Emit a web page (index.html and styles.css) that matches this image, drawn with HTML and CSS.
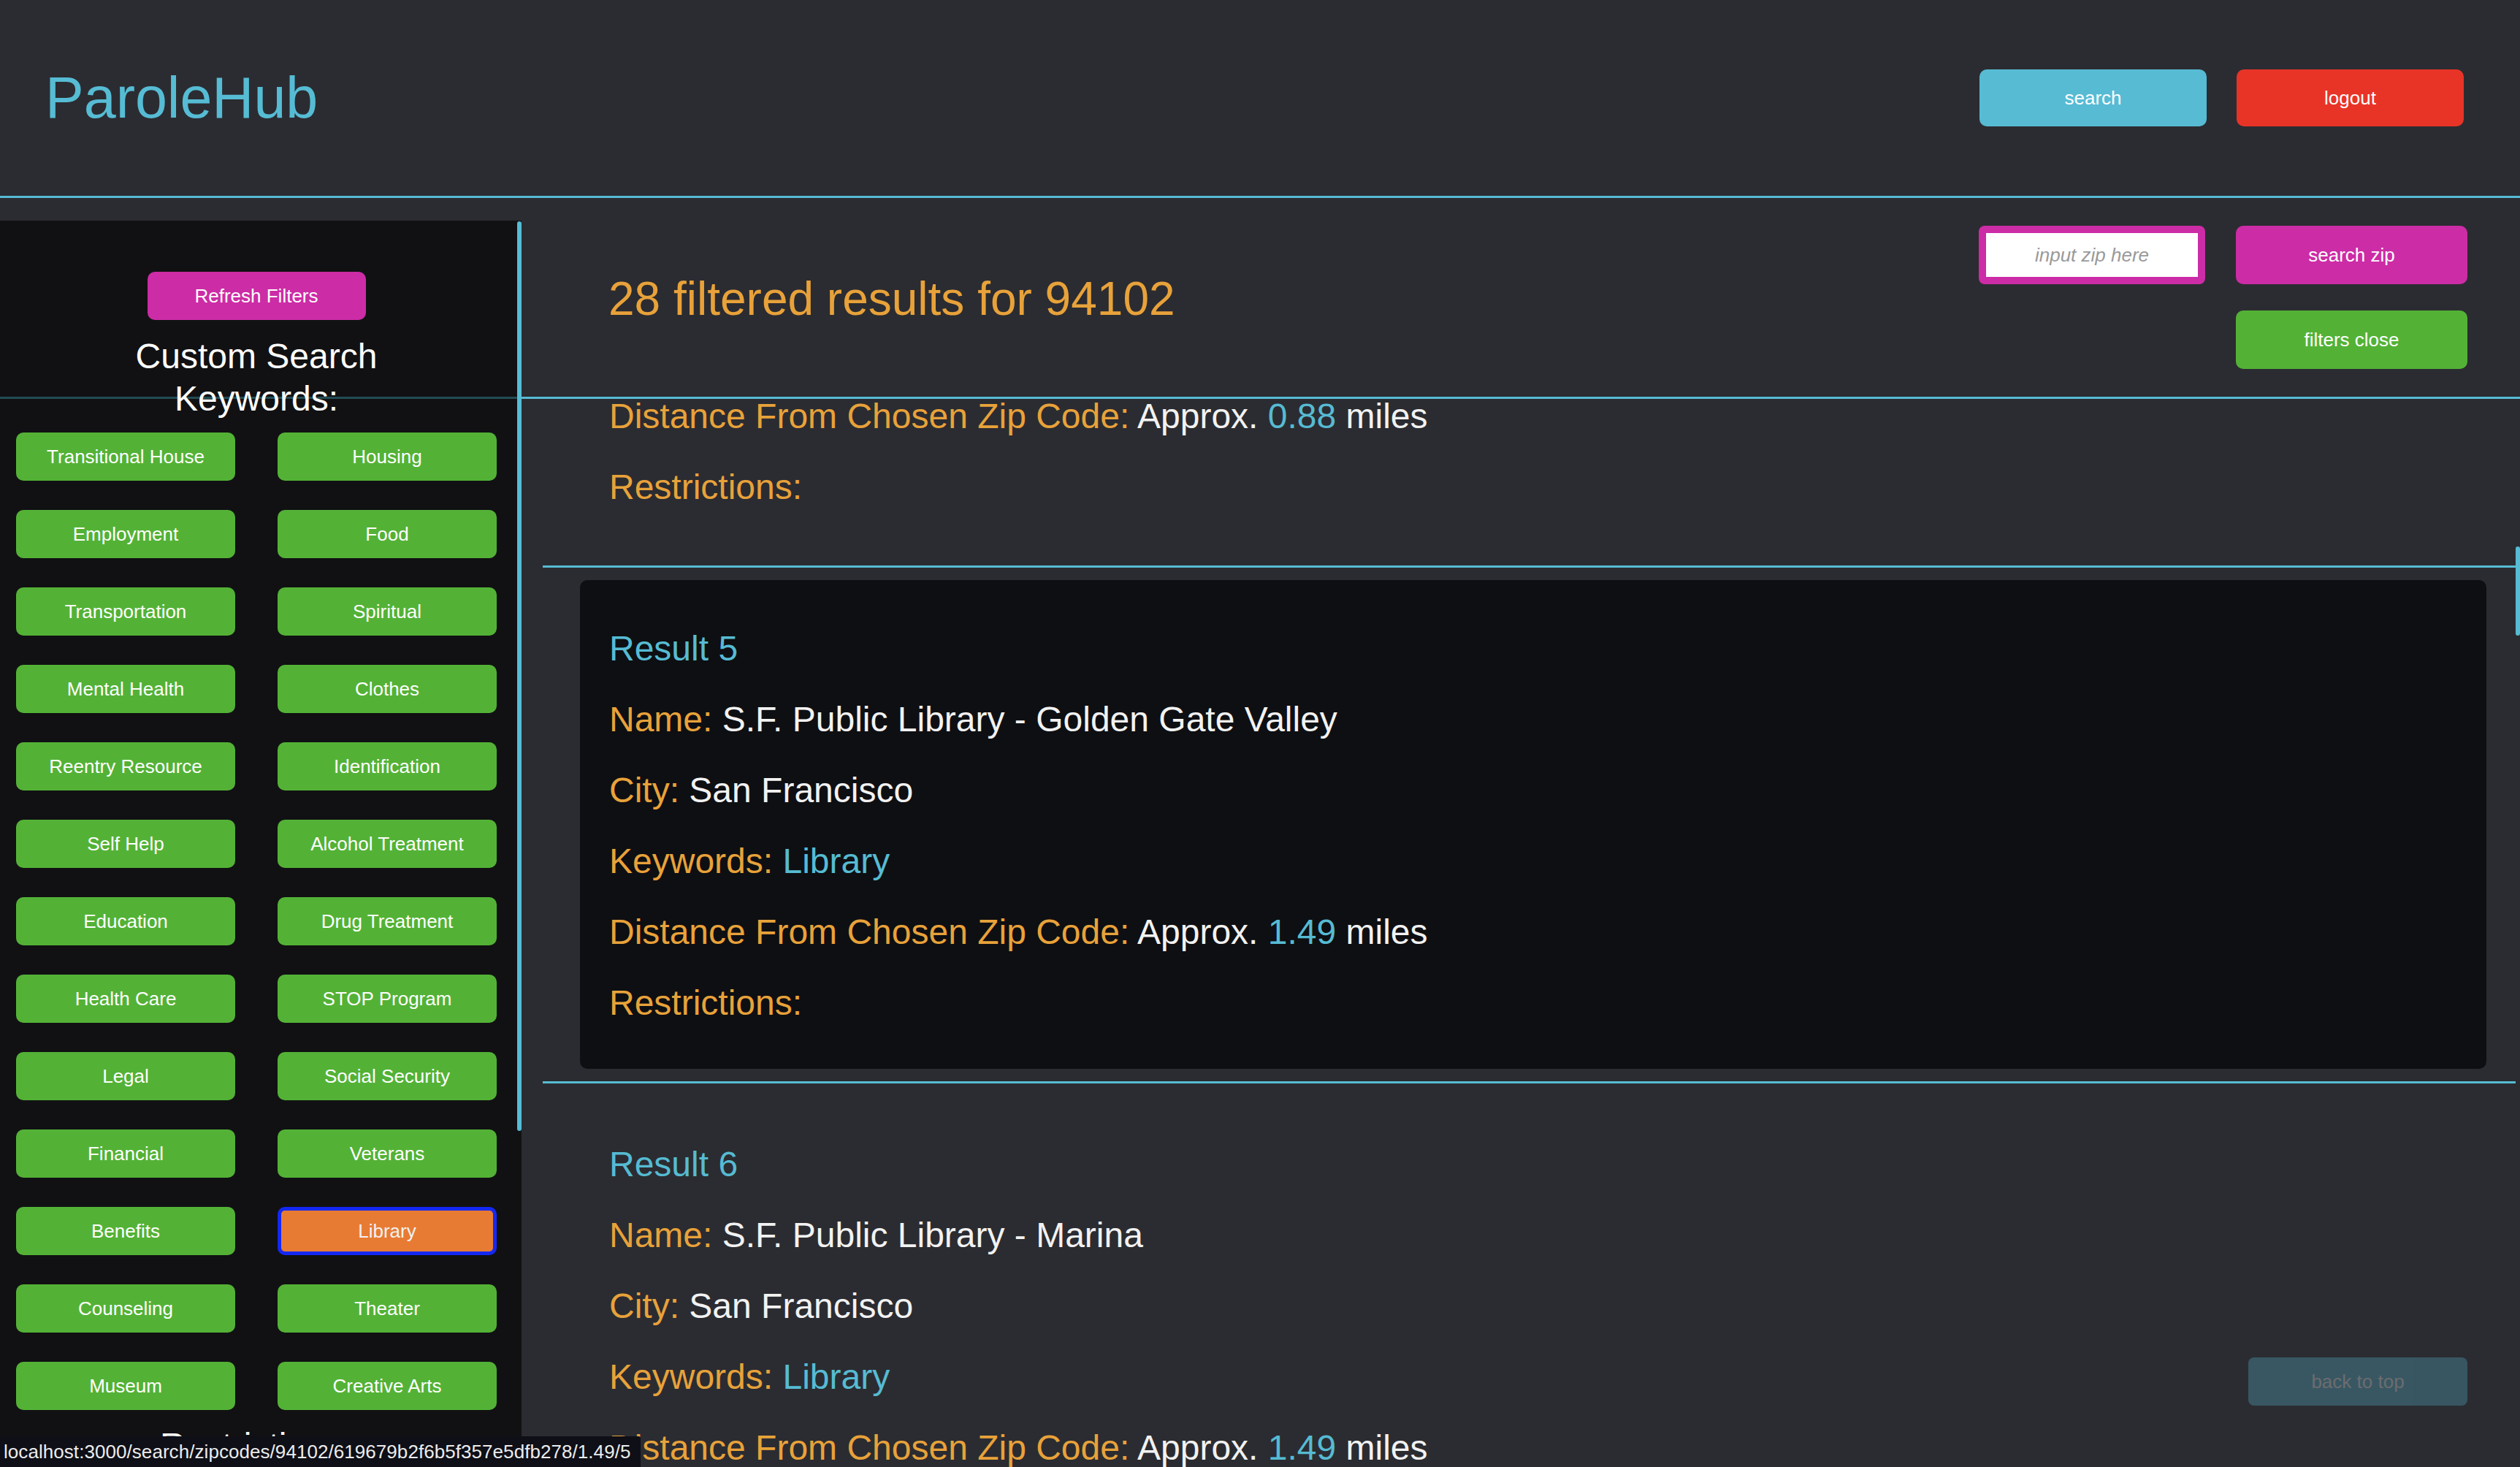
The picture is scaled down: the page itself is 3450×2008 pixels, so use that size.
FILE: index.html
```html
<!DOCTYPE html>
<html lang="en">
<head>
<meta charset="utf-8">
<title>ParoleHub</title>
<link rel="stylesheet" href="styles.css">
</head>
<body>
<div class="app">
  <header class="topbar">
    <h1 class="logo">ParoleHub</h1>
    <nav class="top-actions">
      <button class="btn btn-blue top-btn">search</button>
      <button class="btn btn-red top-btn">logout</button>
    </nav>
  </header>

  <section class="subbar">
    <h2 class="results-title">28 filtered results for 94102</h2>
    <div class="zip-controls">
      <input class="zip-input" type="text" placeholder="input zip here">
      <button class="btn btn-magenta ctrl-btn">search zip</button>
      <span class="spacer"></span>
      <button class="btn btn-green ctrl-btn">filters close</button>
    </div>
  </section>

  <main class="results-viewport">
    <div class="results-list">
      <article class="result result-partial">
        <div class="card card-partial">
          <p class="field"><span class="label">Distance From Chosen Zip Code:</span> Approx. <span class="accent">0.88</span> miles</p>
          <p class="field"><span class="label">Restrictions:</span></p>
        </div>
      </article>
      <article class="result">
        <div class="card card-active">
          <p class="field title">Result 5</p>
          <p class="field"><span class="label">Name:</span> S.F. Public Library - Golden Gate Valley</p>
          <p class="field"><span class="label">City:</span> San Francisco</p>
          <p class="field"><span class="label">Keywords:</span> <span class="accent">Library</span></p>
          <p class="field"><span class="label">Distance From Chosen Zip Code:</span> Approx. <span class="accent">1.49</span> miles</p>
          <p class="field"><span class="label">Restrictions:</span></p>
        </div>
      </article>
      <article class="result">
        <div class="card">
          <p class="field title">Result 6</p>
          <p class="field"><span class="label">Name:</span> S.F. Public Library - Marina</p>
          <p class="field"><span class="label">City:</span> San Francisco</p>
          <p class="field"><span class="label">Keywords:</span> <span class="accent">Library</span></p>
          <p class="field"><span class="label">Distance From Chosen Zip Code:</span> Approx. <span class="accent">1.49</span> miles</p>
          <p class="field"><span class="label">Restrictions:</span></p>
        </div>
      </article>
    </div>
    <span class="scroll-thumb main-thumb"></span>
  </main>

  <aside class="sidebar">
    <button class="btn btn-magenta refresh-btn">Refresh Filters</button>
    <h3 class="side-heading">Custom Search Keywords:</h3>
    <div class="keyword-grid">
      <button class="btn btn-green kw">Transitional House</button>
      <button class="btn btn-green kw">Housing</button>
      <button class="btn btn-green kw">Employment</button>
      <button class="btn btn-green kw">Food</button>
      <button class="btn btn-green kw">Transportation</button>
      <button class="btn btn-green kw">Spiritual</button>
      <button class="btn btn-green kw">Mental Health</button>
      <button class="btn btn-green kw">Clothes</button>
      <button class="btn btn-green kw">Reentry Resource</button>
      <button class="btn btn-green kw">Identification</button>
      <button class="btn btn-green kw">Self Help</button>
      <button class="btn btn-green kw">Alcohol Treatment</button>
      <button class="btn btn-green kw">Education</button>
      <button class="btn btn-green kw">Drug Treatment</button>
      <button class="btn btn-green kw">Health Care</button>
      <button class="btn btn-green kw">STOP Program</button>
      <button class="btn btn-green kw">Legal</button>
      <button class="btn btn-green kw">Social Security</button>
      <button class="btn btn-green kw">Financial</button>
      <button class="btn btn-green kw">Veterans</button>
      <button class="btn btn-green kw">Benefits</button>
      <button class="btn kw kw-selected">Library</button>
      <button class="btn btn-green kw">Counseling</button>
      <button class="btn btn-green kw">Theater</button>
      <button class="btn btn-green kw">Museum</button>
      <button class="btn btn-green kw">Creative Arts</button>
    </div>
    <h3 class="side-heading side-heading-2">Restrictions:</h3>
    <span class="scroll-thumb side-thumb"></span>
  </aside>

  <button class="btn back-top">back to top</button>
  <div class="status-bar">localhost:3000/search/zipcodes/94102/619679b2f6b5f357e5dfb278/1.49/5</div>
</div>
</body>
</html>
```

FILE: styles.css
```css
* { box-sizing: border-box; }

html, body {
  margin: 0;
  padding: 0;
  height: 100%;
  overflow: hidden;
}

body {
  background: #2b2c31;
  font-family: "Liberation Sans", Arial, Helvetica, sans-serif;
  color: #f0f0f0;
}

.app {
  position: relative;
  height: 100vh;
  display: flex;
  flex-direction: column;
}

/* ---------- buttons ---------- */
.btn {
  font-family: inherit;
  font-size: 26px;
  line-height: 30px;
  color: #ffffff;
  border: 0;
  border-radius: 10px;
  padding: 0;
  cursor: pointer;
  text-align: center;
}
.btn-blue { background: #57bbd4; }
.btn-red { background: #e83427; }
.btn-magenta { background: #cc2ca6; }
.btn-green { background: #53b236; }

/* ---------- top bar ---------- */
.topbar {
  flex: 0 0 auto;
  height: 271px;
  display: flex;
  align-items: center;
  justify-content: space-between;
  padding: 0 77px 0 62px;
  border-bottom: 3px solid #56bbd3;
}

.logo {
  margin: 0;
  font-size: 79px;
  line-height: 92px;
  font-weight: normal;
  color: #56bcd4;
}

.top-actions {
  display: flex;
  gap: 41px;
}

.top-btn {
  width: 311px;
  height: 78px;
}

/* ---------- sub bar ---------- */
.subbar {
  flex: 0 0 auto;
  height: 275px;
  display: flex;
  align-items: flex-start;
  padding: 0 72px 0 833px;
  border-bottom: 3px solid #56bbd3;
}

.results-title {
  margin: 102px 0 0 0;
  font-size: 64px;
  line-height: 72px;
  font-weight: normal;
  color: #e8a23a;
}

.zip-controls {
  margin: 38px 0 0 auto;
  display: grid;
  grid-template-columns: 310px 317px;
  grid-auto-rows: 80px;
  column-gap: 42px;
  row-gap: 36px;
}

.zip-input {
  width: 310px;
  height: 80px;
  border: 10px solid #cc2ca6;
  border-radius: 8px;
  background: #ffffff;
  font-family: inherit;
  font-size: 26px;
  font-style: italic;
  text-align: center;
  color: #333;
  outline: none;
}
.zip-input::placeholder {
  color: #9a9a9a;
  font-style: italic;
}

.ctrl-btn {
  width: 317px;
  height: 80px;
}

/* ---------- results ---------- */
.results-viewport {
  flex: 1 1 auto;
  position: relative;
  overflow: hidden;
}

.results-list {
  margin: -4px 6px 0 743px;
}

.result {
  padding: 17px 40px 17px 51px;
  border-bottom: 3px solid #56bbd3;
}
.result-partial { padding-top: 0; }

.card {
  display: flex;
  flex-direction: column;
  gap: 42px;
  padding: 66px 0 63px 40px;
  border-radius: 10px;
}
.card-partial { padding-top: 0; }
.card-active { background: #0e0f12; }

.field {
  margin: 0;
  font-size: 48px;
  line-height: 55px;
  color: #f2f2f2;
  white-space: nowrap;
}
.field.title { color: #56bbd3; }
.label { color: #e8a23a; }
.accent { color: #56bbd3; }

/* ---------- sidebar (overlay panel) ---------- */
.sidebar {
  position: absolute;
  left: 0;
  top: 302px;
  bottom: 0;
  width: 714px;
  padding-right: 12px;
  background: rgba(0, 0, 0, 0.6);
  overflow: hidden;
  display: flex;
  flex-direction: column;
  align-items: center;
}

.refresh-btn {
  margin-top: 70px;
  width: 299px;
  height: 66px;
  flex: 0 0 auto;
}

.side-heading {
  margin: 21px 0 0 0;
  width: 400px;
  font-size: 48px;
  line-height: 57.6px;
  font-weight: normal;
  text-align: center;
  color: #ffffff;
}
.side-heading-2 { margin-top: 20px; }

.keyword-grid {
  margin-top: 18px;
  display: grid;
  grid-template-columns: 300px 300px;
  grid-auto-rows: 66px;
  column-gap: 58px;
  row-gap: 40px;
}

.kw {
  width: 300px;
  height: 66px;
}

.kw-selected {
  background: #e87b33;
  border: 5px solid #1428f2;
  color: #f2f2f2;
}

/* ---------- overlays ---------- */
.scroll-thumb {
  position: absolute;
  right: 0;
  width: 6px;
  border-radius: 3px;
  background: #56bbd3;
}
.main-thumb { top: 202px; height: 122px; }
.side-thumb { top: 1px; height: 1245px; }

.back-top {
  position: absolute;
  right: 72px;
  bottom: 84px;
  width: 300px;
  height: 66px;
  background: #57bbd4;
  opacity: 0.3;
  border-radius: 8px;
}

.status-bar {
  position: absolute;
  left: 0;
  bottom: 0;
  height: 42px;
  padding: 0 14px 0 5px;
  background: #0e0f17;
  color: #ececec;
  font-size: 26px;
  line-height: 42px;
  letter-spacing: 0.06px;
  border-top-right-radius: 3px;
  white-space: nowrap;
}
```
